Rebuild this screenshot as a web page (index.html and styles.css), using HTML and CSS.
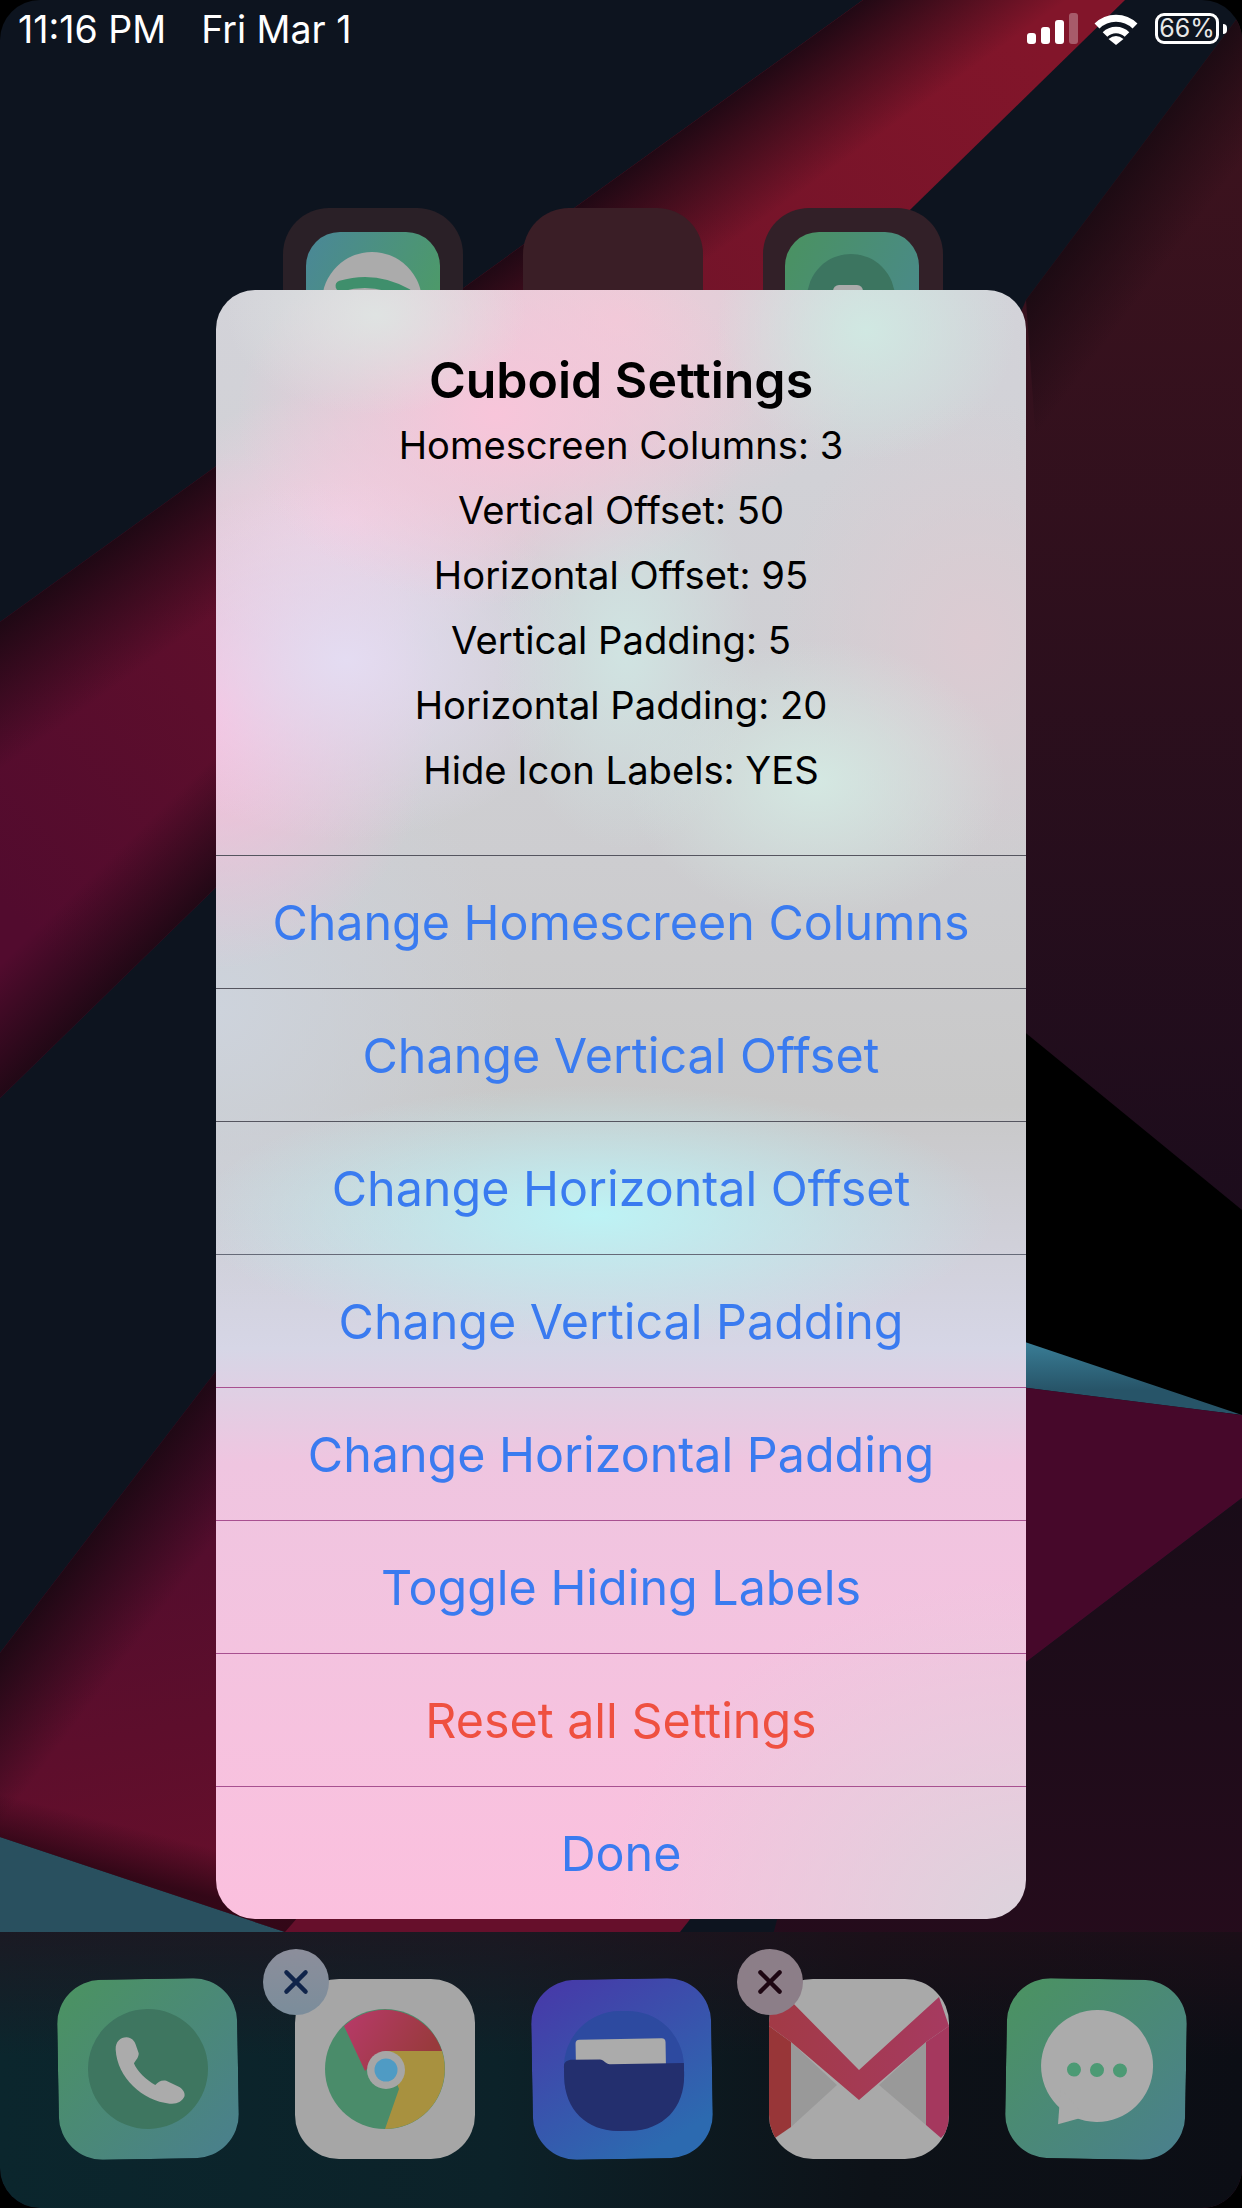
FILE: index.html
```html
<!DOCTYPE html>
<html lang="en">
<head>
  <meta charset="UTF-8">
  <title>Cuboid Settings</title>
  <meta name="viewport" content="width=device-width, initial-scale=1.0">
  <link rel="stylesheet" href="styles.css">
</head>
<body>
<div class="screen">

  <!-- wallpaper -->
  <svg class="wallpaper" viewBox="0 0 1242 2208" aria-hidden="true">
    <defs>
      <linearGradient id="bandFill" gradientUnits="userSpaceOnUse" x1="1000" y1="0" x2="0" y2="900">
        <stop offset="0" stop-color="#82152a"/>
        <stop offset="0.45" stop-color="#6d1329"/>
        <stop offset="1" stop-color="#520b2e"/>
      </linearGradient>
      <linearGradient id="bandTopEdge" gradientUnits="userSpaceOnUse" x1="432" y1="311" x2="502" y2="408">
        <stop offset="0" stop-color="#1c0813" stop-opacity="0.95"/>
        <stop offset="1" stop-color="#1c0813" stop-opacity="0"/>
      </linearGradient>
      <linearGradient id="bandLowEdge" gradientUnits="userSpaceOnUse" x1="216" y1="887" x2="150" y2="819">
        <stop offset="0" stop-color="#1c0813" stop-opacity="0.9"/>
        <stop offset="1" stop-color="#1c0813" stop-opacity="0"/>
      </linearGradient>
      <linearGradient id="rightFill" x1="0" y1="0" x2="0" y2="1">
        <stop offset="0" stop-color="#40131e"/>
        <stop offset="1" stop-color="#1c0c1c"/>
      </linearGradient>
      <linearGradient id="rightEdge" gradientUnits="userSpaceOnUse" x1="1134" y1="156" x2="1206" y2="210">
        <stop offset="0" stop-color="#190a12" stop-opacity="0.9"/>
        <stop offset="1" stop-color="#190a12" stop-opacity="0"/>
      </linearGradient>
      <linearGradient id="lowerFill" gradientUnits="userSpaceOnUse" x1="100" y1="1400" x2="200" y2="1900">
        <stop offset="0" stop-color="#4c0c2e"/>
        <stop offset="1" stop-color="#660f2b"/>
      </linearGradient>
      <linearGradient id="lowerTopEdge" gradientUnits="userSpaceOnUse" x1="108" y1="1511" x2="190" y2="1573">
        <stop offset="0" stop-color="#1c0813" stop-opacity="0.95"/>
        <stop offset="1" stop-color="#1c0813" stop-opacity="0"/>
      </linearGradient>
      <linearGradient id="lowerLowEdge" gradientUnits="userSpaceOnUse" x1="110" y1="1872" x2="122" y2="1825">
        <stop offset="0" stop-color="#2a0614" stop-opacity="0.85"/>
        <stop offset="1" stop-color="#2a0614" stop-opacity="0"/>
      </linearGradient>
      <linearGradient id="tealWedge" gradientUnits="userSpaceOnUse" x1="1026" y1="1340" x2="1026" y2="1390">
        <stop offset="0" stop-color="#3a7f98"/>
        <stop offset="1" stop-color="#275468"/>
      </linearGradient>
      <linearGradient id="lowerRight" x1="0" y1="0" x2="0" y2="1">
        <stop offset="0" stop-color="#190c18"/>
        <stop offset="1" stop-color="#2c0c1e"/>
      </linearGradient>
    </defs>
    <rect width="1242" height="2208" fill="#0d141f"/>
    <polygon points="1242,12 1242,1215 900,935 900,600 1026,300" fill="url(#rightFill)"/>
    <polygon points="1242,12 1242,500 1040,500 1026,300" fill="url(#rightEdge)"/>
    <polygon points="863,0 1125,0 0,1098 0,622" fill="url(#bandFill)"/>
    <polygon points="863,0 1125,0 0,1098 0,622" fill="url(#bandTopEdge)"/>
    <polygon points="500,610 0,1098 0,622 500,300" fill="url(#bandLowEdge)"/>
    <polygon points="900,930 1242,1210 1242,1420 900,1300" fill="#000"/>
    <polygon points="900,1300 1242,1415 900,1372" fill="url(#tealWedge)"/>
    <polygon points="900,1372 1242,1415 1242,1498 900,1758" fill="#46082a"/>
    <polygon points="800,1834 1242,1498 1242,2208 700,2208" fill="url(#lowerRight)"/>
    <polygon points="600,870 800,1780 680,1932 285,1932 0,1837 0,1653" fill="url(#lowerFill)"/>
    <polygon points="600,870 800,1780 680,1932 285,1932 0,1837 0,1653" fill="url(#lowerTopEdge)"/>
    <polygon points="0,1837 285,1932 0,1932" fill="#29505f"/>
    <polygon points="0,1700 400,1800 285,1932 0,1837" fill="url(#lowerLowEdge)"/>
  </svg>

  <div class="status-bar">
    <div class="status-left">
      <span>11:16 PM</span>
      <span>Fri Mar 1</span>
    </div>
    <div class="status-right">
      <div class="signal">
        <i class="bar bar-1"></i>
        <i class="bar bar-2"></i>
        <i class="bar bar-3"></i>
        <i class="bar bar-4"></i>
      </div>
      <svg class="wifi" viewBox="0 0 46 34" aria-hidden="true">
        <path d="M4 14A27 27 0 0 1 42 14" fill="none" stroke="#fff" stroke-width="7"/>
        <path d="M12 22.5A15.5 15.5 0 0 1 34 22.5" fill="none" stroke="#fff" stroke-width="6.5"/>
        <path d="M15.5 27Q23 21 30.5 27L23 33Z" fill="#fff"/>
      </svg>
      <div class="battery">66%</div>
      <i class="battery-nub"></i>
    </div>
  </div>

  <!-- folders on the homescreen, mostly hidden by the alert -->
  <div class="home-row">
    <svg class="home-icon" viewBox="0 0 180 180" aria-hidden="true">
      <defs>
        <linearGradient id="ghostA" x1="0" y1="0" x2="1" y2="0.5">
          <stop offset="0" stop-color="#4a8798"/>
          <stop offset="1" stop-color="#4d9a68"/>
        </linearGradient>
      </defs>
      <rect width="180" height="180" rx="46" fill="#2a2027"/>
      <rect x="23" y="24" width="134" height="134" rx="34" fill="url(#ghostA)"/>
      <circle cx="89" cy="94" r="50" fill="#ababab"/>
      <path d="M58 78Q92 68 124 86" fill="none" stroke="#3f8f6c" stroke-width="11" stroke-linecap="round"/>
    </svg>
    <svg class="home-icon" viewBox="0 0 180 180" aria-hidden="true">
      <rect width="180" height="180" rx="46" fill="#3a1e26"/>
    </svg>
    <svg class="home-icon" viewBox="0 0 180 180" aria-hidden="true">
      <defs>
        <linearGradient id="ghostC" x1="0" y1="0" x2="1" y2="0.5">
          <stop offset="0" stop-color="#4a9260"/>
          <stop offset="1" stop-color="#4a8a88"/>
        </linearGradient>
      </defs>
      <rect width="180" height="180" rx="46" fill="#322028"/>
      <rect x="22" y="24" width="134" height="134" rx="34" fill="url(#ghostC)"/>
      <circle cx="88" cy="90" r="44" fill="#3c7560"/>
      <rect x="70" y="77" width="30" height="30" rx="6" fill="#ababab"/>
    </svg>
  </div>

  <div class="alert">
    <div class="alert-head">
      <h2>Cuboid Settings</h2>
      <p>Homescreen Columns: 3</p>
      <p>Vertical Offset: 50</p>
      <p>Horizontal Offset: 95</p>
      <p>Vertical Padding: 5</p>
      <p>Horizontal Padding: 20</p>
      <p>Hide Icon Labels: YES</p>
    </div>
    <div class="alert-btn">Change Homescreen Columns</div>
    <div class="alert-btn">Change Vertical Offset</div>
    <div class="alert-btn">Change Horizontal Offset</div>
    <div class="alert-btn line-mid">Change Vertical Padding</div>
    <div class="alert-btn line-pink">Change Horizontal Padding</div>
    <div class="alert-btn line-pink">Toggle Hiding Labels</div>
    <div class="alert-btn line-pink danger">Reset all Settings</div>
    <div class="alert-btn line-pink">Done</div>
  </div>

  <div class="dock">
    <div class="app tilt-left">
      <svg viewBox="0 0 180 180" aria-hidden="true">
        <defs>
          <linearGradient id="phoneBg" x1="0" y1="0" x2="1" y2="1">
            <stop offset="0" stop-color="#4b9360"/>
            <stop offset="1" stop-color="#4a7f8e"/>
          </linearGradient>
        </defs>
        <rect width="180" height="180" fill="url(#phoneBg)"/>
        <circle cx="90" cy="90" r="60" fill="#3e7660"/>
        <path d="M58 70C58 62 63 58 69 58C74 58 77 62 78 65L81 74C81 78 78 81 76 84C79 92 88 101 97 106C100 103 103 101 108 102L120 108C124 110 127 114 126 118C124 123 118 126 111 125C84 122 59 98 58 70Z" fill="#ababab"/>
      </svg>
    </div>

    <div class="app">
      <svg viewBox="0 0 180 180" aria-hidden="true">
        <defs>
          <linearGradient id="chromeRed" x1="0" y1="0" x2="1" y2="0.4">
            <stop offset="0" stop-color="#b83a6a"/>
            <stop offset="1" stop-color="#983a3c"/>
          </linearGradient>
        </defs>
        <rect width="180" height="180" fill="#a6a6a6"/>
        <circle cx="90" cy="90" r="60" fill="#4a8c6a"/>
        <path d="M49 47A60 60 0 0 1 147 72H90L70 92Z" fill="url(#chromeRed)"/>
        <path d="M147 72A60 60 0 0 1 90 150L104 110L90 72Z" fill="#a8913f"/>
        <circle cx="91" cy="91" r="19" fill="#a6a6a6"/>
        <circle cx="91" cy="91" r="11.5" fill="#4f9bc4"/>
      </svg>
      <div class="remove-badge badge-blue">
        <svg viewBox="0 0 30 30" aria-hidden="true"><path d="M7 7L23 23M23 7L7 23" stroke-width="3.6" stroke-linecap="round" fill="none"/></svg>
      </div>
    </div>

    <div class="app tilt-left">
      <svg viewBox="0 0 180 180" aria-hidden="true">
        <defs>
          <linearGradient id="filesBg" x1="0" y1="0" x2="0.6" y2="1">
            <stop offset="0" stop-color="#4837a8"/>
            <stop offset="1" stop-color="#2c6ab0"/>
          </linearGradient>
        </defs>
        <rect width="180" height="180" fill="url(#filesBg)"/>
        <rect x="32" y="32" width="120" height="120" rx="56" fill="#2d4aa0"/>
        <rect x="44" y="60" width="90" height="34" rx="4" fill="#ababab"/>
        <path d="M32 86C32 82 36 80 40 80H68C72 80 74 85 78 85H152V97C152 130 130 152 97 152H87C54 152 32 130 32 97Z" fill="#232f6e"/>
      </svg>
    </div>

    <div class="app">
      <svg viewBox="0 0 180 180" aria-hidden="true">
        <defs>
          <linearGradient id="gmailRed" x1="0" y1="0" x2="1" y2="0">
            <stop offset="0" stop-color="#a23a46"/>
            <stop offset="1" stop-color="#a63a60"/>
          </linearGradient>
        </defs>
        <rect width="180" height="180" fill="#a9a9a9"/>
        <polygon points="22,63 68,106 22,148" fill="#999"/>
        <polygon points="157,63 110,106 157,146" fill="#999"/>
        <polygon points="0,47 22,63 22,148 6,159 0,150" fill="#983638"/>
        <polygon points="180,47 157,63 157,146 172,159 180,150" fill="#a5385e"/>
        <polygon points="0,28 16,16 90,91 170,18 180,47 157,63 90,121 22,63 0,47" fill="url(#gmailRed)"/>
      </svg>
      <div class="remove-badge badge-plum">
        <svg viewBox="0 0 30 30" aria-hidden="true"><path d="M7 7L23 23M23 7L7 23" stroke-width="3.6" stroke-linecap="round" fill="none"/></svg>
      </div>
    </div>

    <div class="app tilt-right">
      <svg viewBox="0 0 180 180" aria-hidden="true">
        <defs>
          <linearGradient id="msgBg" x1="0" y1="0" x2="1" y2="1">
            <stop offset="0" stop-color="#4b9360"/>
            <stop offset="1" stop-color="#4a7f8e"/>
          </linearGradient>
        </defs>
        <rect width="180" height="180" fill="url(#msgBg)"/>
        <circle cx="91" cy="87" r="56" fill="#ababab"/>
        <path d="M53 146L55 110L80 138Z" fill="#ababab"/>
        <circle cx="68" cy="91" r="7" fill="#4c9a74"/>
        <circle cx="91" cy="91" r="7" fill="#4c9a74"/>
        <circle cx="114" cy="91" r="7" fill="#4c9a74"/>
      </svg>
    </div>
  </div>
</div>
</body>
</html>
```

FILE: styles.css
```css
* {
  box-sizing: border-box;
}
html, body {
  margin: 0;
  background: #000;
}
body {
  font-family: Inter, "Liberation Sans", sans-serif;
}
.screen {
  position: relative;
  width: 1242px;
  height: 2208px;
  overflow: hidden;
  border-radius: 40px;
  display: flex;
  flex-direction: column;
}
.wallpaper {
  position: absolute;
  top: 0;
  left: 0;
  width: 1242px;
  height: 2208px;
}

/* status bar */
.status-bar {
  position: relative;
  display: flex;
  justify-content: space-between;
  align-items: flex-start;
  height: 60px;
  padding: 12px 15px 0 18px;
  color: #fff;
}
.status-left {
  display: flex;
  gap: 35px;
  font-size: 37.5px;
  line-height: 36px;
}
.status-right {
  display: flex;
  align-items: flex-start;
  padding-top: 1px;
}
.signal {
  display: flex;
  align-items: flex-end;
  gap: 5px;
  height: 31px;
}
.bar {
  display: block;
  width: 9px;
  background: #fff;
  border-radius: 3px;
}
.bar-1 { height: 11px; }
.bar-2 { height: 17px; }
.bar-3 { height: 24px; }
.bar-4 { height: 31px; opacity: 0.3; }
.wifi {
  width: 46px;
  height: 34px;
  margin-left: 15px;
  margin-top: -1px;
}
.battery {
  width: 64px;
  height: 31px;
  margin-left: 16px;
  border: 3px solid #fff;
  border-radius: 9px;
  font-size: 25px;
  line-height: 25px;
  text-align: center;
  color: #e8e8e8;
}
.battery-nub {
  display: block;
  width: 4px;
  height: 10px;
  margin: 11px 0 0 4px;
  background: #fff;
  border-radius: 0 4px 4px 0;
}

/* homescreen row behind the alert */
.home-row {
  position: relative;
  display: flex;
  gap: 60px;
  padding: 148px 0 0 283px;
}
.home-icon {
  width: 180px;
  height: 180px;
}

/* alert */
.alert {
  position: absolute;
  top: 290px;
  left: 216px;
  width: 810px;
  height: 1629px;
  border-radius: 39px;
  overflow: hidden;
  text-align: center;
  background:
    radial-gradient(ellipse 150px 130px at 650px 40px, #d0e8e2, rgba(208,232,226,0)),
    radial-gradient(ellipse 150px 100px at 160px 25px, #dfe3e2, rgba(223,227,226,0)),
    radial-gradient(ellipse 260px 190px at 280px 125px, #f8c5da, rgba(248,197,218,0)),
    radial-gradient(ellipse 270px 210px at 400px 30px, #efcbd8, rgba(239,203,216,0)),
    radial-gradient(ellipse 130px 200px at 410px 360px, #d0e4e2, rgba(208,228,226,0)),
    radial-gradient(ellipse 190px 140px at 600px 490px, #d4e8e2, rgba(212,232,226,0)),
    radial-gradient(ellipse 240px 180px at 130px 370px, #e4dcf2, rgba(228,220,242,0)),
    radial-gradient(ellipse 200px 130px at 130px 230px, #f0d0e2, rgba(240,208,226,0)),
    radial-gradient(ellipse 220px 260px at 0 420px, #fbbcdc, rgba(251,188,220,0)),
    radial-gradient(ellipse 200px 240px at 760px 350px, #dccbd2, rgba(220,203,210,0)),
    radial-gradient(ellipse 400px 130px at 380px 925px, #bdf3f5, rgba(189,243,245,0)),
    radial-gradient(ellipse 300px 300px at 0 720px, #cdd3dc, rgba(205,211,220,0)),
    radial-gradient(ellipse 420px 340px at 810px 1629px, #dcd3dc, rgba(220,211,220,0)),
    linear-gradient(180deg, #d3d3d9 0, #cdcdd0 35%, #c8c8c8 50%, #d6d6e6 65%, #efc5e0 72%, #fbc0de 100%);
}
.alert-head {
  height: 565px;
  padding-top: 58px;
  color: #000;
}
.alert-head h2 {
  margin: 0;
  font-size: 50px;
  line-height: 65px;
  font-weight: 600;
}
.alert-head p {
  margin: 0;
  font-size: 38.2px;
  line-height: 65px;
}
.alert-btn {
  height: 133px;
  border-top: 1px solid #55555f;
  font-size: 48.4px;
  line-height: 134px;
  color: #3a7bf0;
}
.line-mid {
  border-top-color: #666a78;
}
.line-pink {
  border-top-color: #a85090;
}
.danger {
  color: #ef5040;
}

/* dock */
.dock {
  position: relative;
  display: flex;
  gap: 57px;
  margin-top: auto;
  height: 276px;
  padding: 47px 0 0 58px;
  background:
    linear-gradient(180deg, rgba(42,14,26,0.5), rgba(42,14,26,0) 45%),
    linear-gradient(90deg, #0b262d 0, #0c2229 40%, #0d1218 70%, #0c0e15 100%);
  border-radius: 0 0 40px 40px;
}
.app {
  position: relative;
  width: 180px;
  height: 180px;
}
.app > svg {
  display: block;
  width: 180px;
  height: 180px;
  border-radius: 44px;
}
.tilt-left {
  transform: rotate(-1deg);
}
.tilt-right {
  transform: rotate(1deg);
}
.remove-badge {
  position: absolute;
  top: -30px;
  left: -32px;
  width: 66px;
  height: 66px;
  padding: 15px;
  border-radius: 50%;
}
.remove-badge svg {
  display: block;
  width: 36px;
  height: 36px;
}
.badge-blue {
  background: linear-gradient(180deg, #8c8e9b, #7b8d9b);
}
.badge-blue path {
  stroke: #10244a;
}
.badge-plum {
  background: #8c7e88;
}
.badge-plum path {
  stroke: #1d0612;
}
```
